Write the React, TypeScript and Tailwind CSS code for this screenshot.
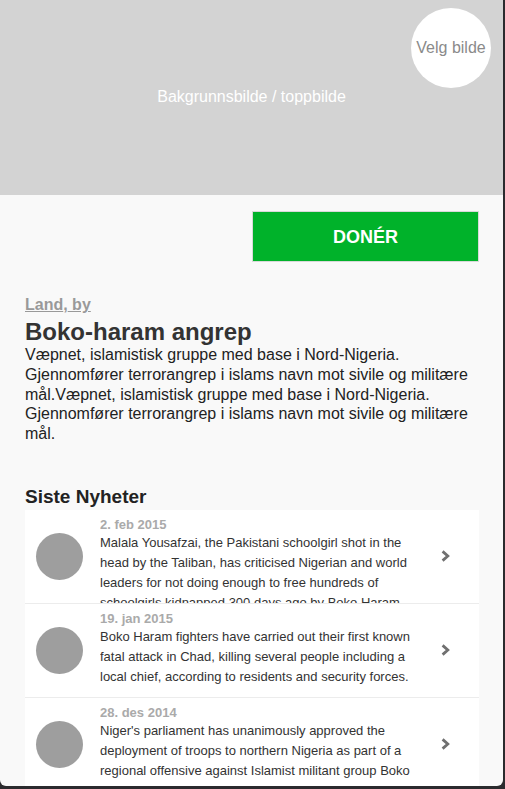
import React from "react";

const news = [
  {
    date: "2. feb 2015",
    text: "Malala Yousafzai, the Pakistani schoolgirl shot in the head by the Taliban, has criticised Nigerian and world leaders for not doing enough to free hundreds of schoolgirls kidnapped 300 days ago by Boko Haram.",
  },
  {
    date: "19. jan 2015",
    text: "Boko Haram fighters have carried out their first known fatal attack in Chad, killing several people including a local chief, according to residents and security forces.",
  },
  {
    date: "28. des 2014",
    text: "Niger's parliament has unanimously approved the deployment of troops to northern Nigeria as part of a regional offensive against Islamist militant group Boko Haram, which has launched several cross-border raids.",
  },
];

function Chevron() {
  return (
    <svg width="9" height="12" viewBox="0 0 9 12" fill="none">
      <polyline
        points="1.6,1.4 6.8,6 1.6,10.6"
        stroke="#707070"
        strokeWidth="2.8"
        strokeLinecap="butt"
        strokeLinejoin="miter"
      />
    </svg>
  );
}

export default function App() {
  return (
    <div className="w-[505px] h-[789px] bg-[#2b2b2e] overflow-hidden font-['Liberation_Sans',Arial,sans-serif]">
      <div className="w-[503px] h-[786px] bg-[#f9f9f9] rounded-b-[6px] overflow-hidden flex flex-col">
        {/* Header image placeholder */}
        <div className="relative h-[195px] shrink-0 bg-[#d3d3d3] flex items-center justify-center">
          <span className="text-white text-[16px] leading-[18px] pb-[2px]">Bakgrunnsbilde / toppbilde</span>
          <div className="absolute top-[8px] right-[12px] w-[80px] h-[80px] rounded-full bg-white flex items-center justify-center">
            <span className="text-[#8a8a8a] text-[16px] leading-[18px]">Velg bilde</span>
          </div>
        </div>

        {/* Donate button */}
        <div className="flex justify-end pr-[24px] pt-[16px]">
          <button className="w-[227px] h-[51px] bg-[#00b22a] border border-[#d9d9d9] text-white font-bold text-[18px] leading-[20px] flex items-center justify-center">
            DONÉR
          </button>
        </div>

        {/* Info */}
        <div className="px-[25px] pt-[34px]">
          <div className="text-[16px] leading-[18px] font-bold text-[#999999]">
            <span className="underline">Land</span>,<span className="underline"> by</span>
          </div>
          <h1 className="mt-[5px] text-[24px] leading-[26px] font-bold text-[#333333]">Boko-haram angrep</h1>
          <p className="text-[16px] leading-[19.75px] text-[#222222]">
            Væpnet, islamistisk gruppe med base i Nord-Nigeria. Gjennomfører terrorangrep i islams navn mot sivile og
            militære mål.Væpnet, islamistisk gruppe med base i Nord-Nigeria. Gjennomfører terrorangrep i islams navn mot
            sivile og militære mål.
          </p>
          <h2 className="mt-[41px] text-[19px] leading-[24px] font-bold text-[#222222]">Siste Nyheter</h2>
        </div>

        {/* News list */}
        <div className="mx-[25px] mt-[1px] w-[454px] bg-white flex flex-col">
          {news.map((n, i) => (
            <div
              key={i}
              className="h-[94px] shrink-0 box-border border-b border-[#ececec] flex items-center overflow-hidden"
            >
              <div className="ml-[11px] w-[47px] h-[47px] rounded-full bg-[#9e9e9e] shrink-0" />
              <div className="ml-[17px] w-[320px] h-full pt-[6px] overflow-hidden shrink-0 self-start">
                <div className="text-[13px] leading-[17px] font-bold text-[#aaaaaa]">{n.date}</div>
                <div className="text-[13px] leading-[20px] text-[#333333]">{n.text}</div>
              </div>
              <div className="ml-[21px] flex items-center">
                <Chevron />
              </div>
            </div>
          ))}
        </div>
      </div>
    </div>
  );
}
